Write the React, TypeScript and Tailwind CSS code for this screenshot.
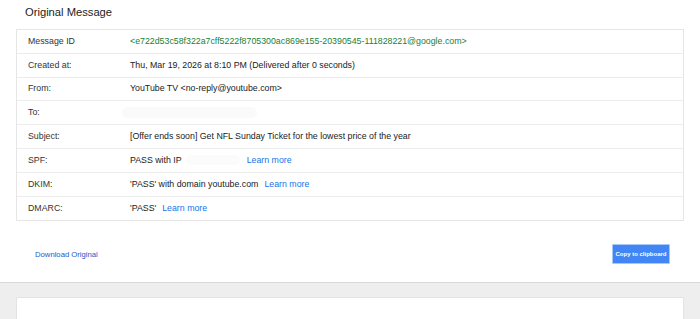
function Learn() {
  return <a className="ml-[6px] text-[#1a73e8]">Learn more</a>;
}

export default function App() {
  const data: { label: string; value: JSX.Element }[] = [
    {
      label: 'Message ID',
      value: (
        <span className="text-[#188038]">
          {'<e722d53c58f322a7cff5222f8705300ac869e155-20390545-111828221@google.com>'}
        </span>
      ),
    },
    { label: 'Created at:', value: <span>Thu, Mar 19, 2026 at 8:10 PM (Delivered after 0 seconds)</span> },
    { label: 'From:', value: <span>{'YouTube TV <no-reply@youtube.com>'}</span> },
    {
      label: 'To:',
      value: <span className="ml-[-8px] inline-block h-[11px] w-[135px] rounded-full bg-[#fafafa]" />,
    },
    { label: 'Subject:', value: <span>[Offer ends soon] Get NFL Sunday Ticket for the lowest price of the year</span> },
    {
      label: 'SPF:',
      value: (
        <span className="flex items-center">
          PASS with IP
          <span className="mx-[4px] inline-block h-[10px] w-[54px] rounded-full bg-[#fbfbfb]" />
          <a className="ml-[3px] text-[#1a73e8]">Learn more</a>
        </span>
      ),
    },
    {
      label: 'DKIM:',
      value: (
        <span className="flex items-center">
          'PASS' with domain youtube.com
          <Learn />
        </span>
      ),
    },
    {
      label: 'DMARC:',
      value: (
        <span className="flex items-center">
          'PASS'
          <Learn />
        </span>
      ),
    },
  ];

  return (
    <div className="min-h-screen bg-white font-['Liberation_Sans',Arial,sans-serif] text-[#202124]">
      <div className="px-4">
        <div className="flex h-[24px] items-center pl-[9px] text-[11.2px] text-[#222]">Original Message</div>
        <div className="mt-[5px] border border-[#e6e6e6]">
          {data.map((r, i) => (
            <div
              key={r.label}
              className={`flex h-[23.8px] items-center text-[8.8px] ${i < data.length - 1 ? 'border-b border-[#ececec]' : ''}`}
            >
              <div className="w-[113px] shrink-0 pl-[11px] text-[#333]">{r.label}</div>
              <div className="flex items-center whitespace-nowrap">{r.value}</div>
            </div>
          ))}
        </div>
        <div className="mb-[18px] mt-[23px] flex items-center justify-between pl-[19px] pr-[14px]">
          <a className="text-[7.7px] text-[#1c5bc7]">Download Original</a>
          <button className="flex h-[20px] w-[58px] items-center justify-center rounded-[1px] border border-[#a8c7fa] bg-[#4285f4] text-[6px] font-bold text-white">
            Copy to clipboard
          </button>
        </div>
      </div>
      <div className="border-t border-[#d9d9d9] bg-[#eeeeee] px-4 pt-[14px]">
        <div className="h-[120px] rounded-t-[2px] border border-[#e3e3e3] bg-white" />
      </div>
    </div>
  );
}
